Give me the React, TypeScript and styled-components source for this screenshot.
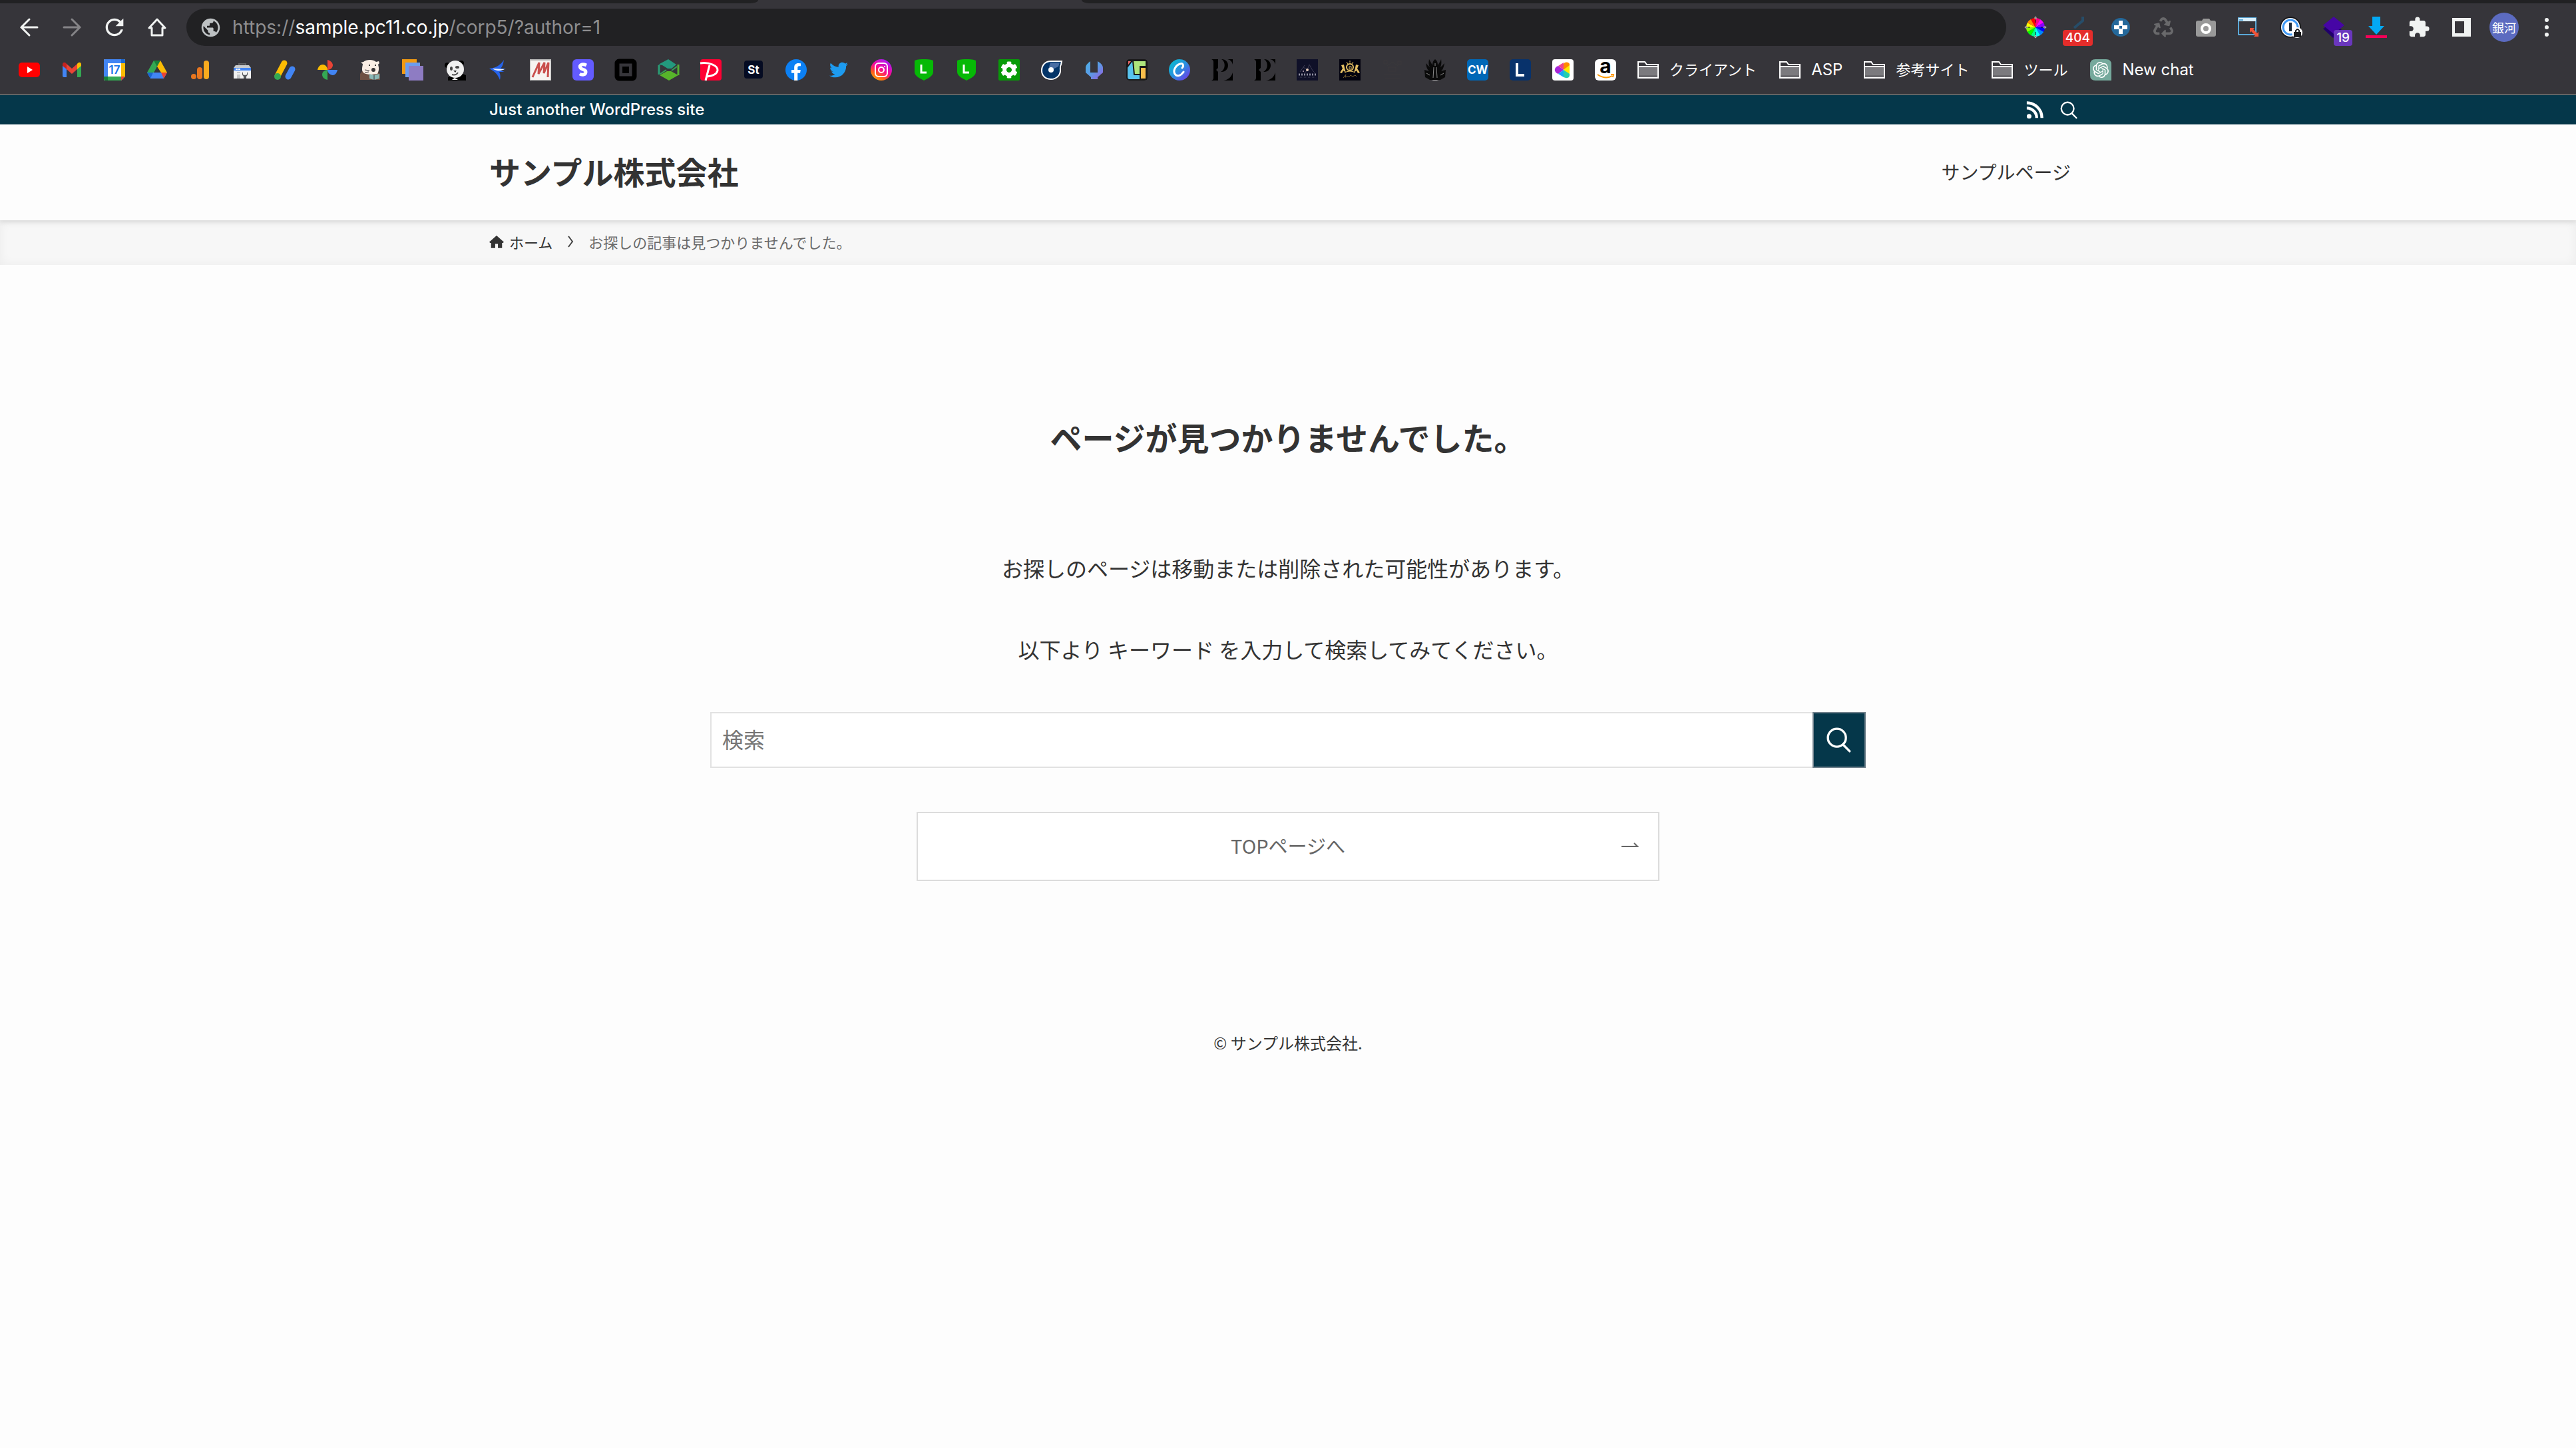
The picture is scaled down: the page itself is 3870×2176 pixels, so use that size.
import React from 'react';
import styled, { createGlobalStyle, css } from 'styled-components';
import { FaTwitter, FaRecycle, FaCog, FaFacebookF } from 'react-icons/fa';
import { MdExtension, MdPublic, MdRefresh } from 'react-icons/md';
import { SiOpenai } from 'react-icons/si';

const navy = '#05374a';
const chromeGrey = '#36353a';
const chromeDark = '#212123';
const uiFont = "Inter, 'Noto Sans CJK JP', sans-serif";
const jpFont = "'Noto Sans CJK JP', sans-serif";

const GlobalStyle = createGlobalStyle`
  * { box-sizing: border-box; }
  body {
    margin: 0;
    background: #fdfdfd;
    color: #333;
    font-family: ${jpFont};
    font-size: 32px;
  }
  a { color: inherit; text-decoration: none; }
  button { font: inherit; cursor: pointer; }
`;

/* ---------- browser frame ---------- */

const Browser = styled.div`
  background: ${chromeGrey};
  border-bottom: 2px solid #656464;
  font-family: ${uiFont};
`;

const TabStrip = styled.div`
  display: flex;
  height: 5px;
`;

const InactiveTabs = styled.div<{ $side: 'left' | 'right' }>`
  background: ${chromeDark};
  ${(p) =>
    p.$side === 'left'
      ? css`
          flex: 0 0 1139px;
          border-bottom-right-radius: 12px 5px;
        `
      : css`
          flex: 1;
          border-bottom-left-radius: 12px 5px;
        `}
`;

const ActiveTab = styled.div`
  flex: 0 0 486px;
`;

const Toolbar = styled.div`
  display: flex;
  align-items: center;
  height: 72px;
  padding: 0 12px;
`;

const ToolButton = styled.button`
  position: relative;
  display: flex;
  align-items: center;
  justify-content: center;
  width: 64px;
  height: 56px;
  padding: 0;
  border: 0;
  background: none;
  color: #f1f3f2;
`;

const Badge = styled.span<{ $color: string; $shift: number }>`
  position: absolute;
  right: ${(p) => p.$shift}px;
  bottom: 0;
  padding: 0 4px;
  border-radius: 4px;
  background: ${(p) => p.$color};
  color: #fff;
  font-size: 19px;
  font-weight: 500;
  line-height: 24px;
`;

const Avatar = styled.span`
  display: flex;
  align-items: center;
  justify-content: center;
  width: 44px;
  height: 44px;
  border-radius: 50%;
  background: #5c6bc0;
  color: #fff;
  font-size: 18px;
`;

const AddressBar = styled.div`
  display: flex;
  flex: 1;
  align-items: center;
  gap: 16px;
  height: 56px;
  margin: 0 12px;
  padding: 0 20px;
  border-radius: 28px;
  background: ${chromeDark};
  color: #bdc1c3;
`;

const Address = styled.div`
  flex: 1;
  color: #8e8e90;
  font-size: 28px;
  line-height: 40px;
  outline: none;
`;

const Host = styled.span`
  color: #fff;
`;

const Bookmarks = styled.nav`
  display: flex;
  align-items: center;
  gap: 32px;
  height: 64px;
  padding: 0 28px 8px;
`;

const Bookmark = styled.a`
  display: flex;
  align-items: center;
  gap: 16px;
  color: #fff;
`;

const BookmarkLabel = styled.span<{ $latin?: boolean }>`
  padding-right: ${(p) => (p.$latin ? 0 : 2)}px;
  font-size: ${(p) => (p.$latin ? 24 : 22)}px;
  line-height: 32px;
  white-space: nowrap;
`;

const Glyph = styled.svg`
  display: block;
  flex: none;
  overflow: visible;
`;

const Icon = ({ size = 32, children }: { size?: number; children: React.ReactNode }) => (
  <Glyph width={size} height={size} viewBox="0 0 32 32" fill="none" aria-hidden="true">
    {children}
  </Glyph>
);

const Letter = ({
  x = 16, y, size, fill = '#fff', weight = 700, children,
}: { x?: number; y: number; size: number; fill?: string; weight?: number; children: string }) => (
  <text x={x} y={y} fontSize={size} fill={fill} fontWeight={weight} textAnchor="middle" fontFamily="Inter, sans-serif">
    {children}
  </text>
);

const Shield = () => (
  <>
    <path d="M2 2C7 0 12 0 16 0s9 0 14 2v17c0 6-8 10-14 13C10 29 2 25 2 19z" fill="#06b906" />
    <path d="M12 8v12h8" stroke="#fff" strokeWidth="3" />
  </>
);

const SerifP = () => (
  <>
    <path d="M0 0h10v13l-3 3 3 3v13H0c2-1 3-2 3-4V4C3 2 2 1 0 0z" fill="#000" />
    <path d="M15 0c14 0 13 20-1 19 7-3 8-15 1-19zM24 0h8v8c-1-4-3-7-8-8zM18 32c8-1 12-6 14-12v12z" fill="#000" />
  </>
);

const FolderIcon = () => (
  <Icon>
    <path d="M1 4h10l3 4h17v20H1z" stroke="#fff" strokeWidth="2" />
    <path d="M2 12h28v15H2z" fill="#7b7a7e" />
    <path d="M2 24h28v3H2z" fill="#6a696d" />
    <path d="M1 11h30" stroke="#fff" strokeWidth="2" />
  </Icon>
);

const favicons: { name: string; art: React.ReactNode }[] = [
  {
    name: 'YouTube',
    art: (<><rect y="5" width="32" height="22" rx="5" fill="#f00" /><path d="M13 11l8 5-8 5z" fill="#fff" /></>),
  },
  {
    name: 'Gmail',
    art: (
      <>
        <path d="M2 9l6 5v13H4q-2 0-2-2z" fill="#4285f4" />
        <path d="M30 9l-6 5v13h4q2 0 2-2z" fill="#34a853" />
        <path d="M8 7l8 7 8-7v8l-8 7-8-7z" fill="#ea4335" />
        <path d="M2 8c0-4 4-4 6-1v8l-6-5z" fill="#c5221f" />
        <path d="M30 8c0-4-4-4-6-1v8l6-5z" fill="#fbbc04" />
      </>
    ),
  },
  {
    name: 'Calendar',
    art: (
      <>
        <rect width="32" height="32" rx="2" fill="#fff" />
        <path d="M0 2q0-2 2-2h24v6H6v20H0z" fill="#4285f4" />
        <path d="M26 0h4q2 0 2 2v4h-6z" fill="#1967d2" />
        <path d="M26 6h6v20h-6z" fill="#fbbc04" />
        <path d="M6 26h20v6H6z" fill="#34a853" />
        <path d="M0 26h6v6H2q-2 0-2-2z" fill="#188038" />
        <path d="M26 26h6l-6 6z" fill="#ea4335" />
        <path d="M32 26v6h-6z" fill="#36353a" />
        <Letter y={22} size={17} fill="#1a73e8" weight={600}>17</Letter>
      </>
    ),
  },
  {
    name: 'Drive',
    art: (
      <>
        <path d="M11 2h10l-5 9-9 18-6-9z" fill="#34a853" />
        <path d="M11 2h10l-5 9z" fill="#188038" />
        <path d="M21 2l10 18h-9l-6-9z" fill="#fbbc04" />
        <path d="M1 20h30l-5 9H6z" fill="#4285f4" />
        <path d="M1 20h9l-4 9z" fill="#1967d2" />
        <path d="M22 20h9l-5 9z" fill="#ea4335" />
        <path d="M16 12l4 8h-9z" fill="#36353a" />
      </>
    ),
  },
  {
    name: 'Analytics',
    art: (
      <>
        <rect x="22" y="2" width="8" height="28" rx="4" fill="#f9ab1e" />
        <rect x="12" y="12" width="8" height="18" rx="4" fill="#e8761f" />
        <circle cx="7" cy="26" r="4" fill="#e8761f" />
      </>
    ),
  },
  {
    name: 'Search Console',
    art: (
      <>
        <path d="M11 10V7h10v3" stroke="#606062" strokeWidth="2" />
        <path d="M6 9h20l3 4H3z" fill="#c9cbcd" />
        <path d="M3 13h26v16H3z" fill="#f1f1f1" />
        <path d="M3 13h26v4H3z" fill="#4285f4" />
        <path d="M6 15h3M10 15h3" stroke="#fff" strokeWidth="2" />
        <path d="M8 19h5v2H8zM8 23h5v6H8z" fill="#c6c8ca" />
        <path d="M17 19c-2 3-1 5 1 7v3h4v-3c2-2 3-4 1-7v4l-3 1-3-1z" fill="#55585c" />
      </>
    ),
  },
  {
    name: 'AdSense',
    art: (
      <g strokeLinecap="round" strokeWidth="9">
        <path d="M5 25L15 6" stroke="#fbbc04" />
        <path d="M21 26l6-11" stroke="#4285f4" />
        <circle cx="5" cy="26" r="5" fill="#34a853" />
      </g>
    ),
  },
  {
    name: 'Photos',
    art: (
      <>
        <path d="M16 1c5 1 8 5 8 8s-3 7-8 7z" fill="#ea4335" />
        <path d="M31 16c-1 5-4 8-7 8s-8-3-8-8z" fill="#4285f4" />
        <path d="M16 31c-5-1-8-4-8-8s4-7 8-7z" fill="#34a853" />
        <path d="M1 16c1-5 4-8 8-8s7 4 7 8z" fill="#fbbc04" />
      </>
    ),
  },
  {
    name: 'Otter',
    art: (
      <>
        <path d="M1 31V22l3-4h22l5 4v9z" fill="#6f5143" />
        <path d="M2 5l4-1C10 0 21 0 25 4l4-1 1 3-2 2c2 6 1 10-1 14l-9 1c-8 0-15-2-14-9 0-3 1-5 1-7z" fill="#fbeee4" />
        <circle cx="15" cy="9" r="1" fill="#000" /><circle cx="24" cy="9" r="1" fill="#000" />
        <ellipse cx="21" cy="16" rx="3" ry="3" fill="#3a3636" />
        <path d="M8 16l7 1M8 20l6-1" stroke="#3a3636" />
        <path d="M15 22l7 2 8-2v7l-8 2-7-2z" fill="#8cb8b5" />
        <path d="M22 24v7" stroke="#36353a" />
      </>
    ),
  },
  {
    name: 'Layers',
    art: (
      <>
        <path d="M0 0h22v22H0z" fill="#f29a12" />
        <path d="M5 5h22v22H5z" fill="#6c9cf0" />
        <path d="M10 10h22v22H10z" fill="#8e7cc3" />
      </>
    ),
  },
  {
    name: 'Panda',
    art: (
      <>
        <path d="M5 27l20-6 7 3v8H5z" fill="#000" />
        <circle cx="4" cy="9" r="4" fill="#000" /><circle cx="25" cy="6" r="4" fill="#000" />
        <ellipse cx="16" cy="15" rx="13" ry="13" fill="#f0f0f0" />
        <ellipse cx="10" cy="14" rx="2" ry="3" fill="#444" /><ellipse cx="19" cy="12" rx="3" ry="2" fill="#444" />
        <path d="M13 17h5l-2 3z" fill="#222" />
        <path d="M11 23q6 2 9-3" stroke="#555" strokeWidth="2" />
        <path d="M11 31l4-3 5 3z" fill="#fff" />
      </>
    ),
  },
  {
    name: 'Swallow',
    art: (
      <>
        <path d="M3 14l6-1C16 11 21 7 25 1c-1 6-2 10-5 13h8l-8 3 6 2h-8c2 4 2 8 1 12-3-7-6-11-11-14z" fill="#2563eb" />
        <path d="M8 14c6 0 12 1 18 1-6 3-13 3-18-1z" fill="#e7efff" />
      </>
    ),
  },
  {
    name: 'M',
    art: (
      <>
        <path d="M0 0h32v32H0z" fill="#bbb" /><path d="M1 2h30v29H1z" fill="#f7f3f1" />
        <path d="M4 27L14 5l-1 17L22 5l-1 16L28 5l-1 22" stroke="#c94f4d" strokeWidth="3" />
      </>
    ),
  },
  {
    name: 'Stripe',
    art: (<><rect width="32" height="32" rx="6" fill="#635bff" /><path d="M21 9c-7-3-11 0-9 4 2 3 8 2 8 6 0 5-6 5-9 3" stroke="#fff" strokeWidth="5" /></>),
  },
  {
    name: 'Square',
    art: (<><rect x="3" y="3" width="26" height="26" rx="3" stroke="#000" strokeWidth="7" /><rect x="11" y="11" width="10" height="10" fill="#000" /></>),
  },
  {
    name: 'Hexagon',
    art: (
      <>
        <path d="M1 8l15-8 12 8-7 6h-6l-8-5z" fill="#23997d" />
        <path d="M2 9v14" stroke="#2a9d75" strokeWidth="3" /><path d="M31 8v16" stroke="#54b233" strokeWidth="3" />
        <path d="M3 24l11-6h6l11 6-14 8z" fill="#57b52a" />
        <path d="M4 22l9-6M29 11l-8 6" stroke="#36a455" strokeWidth="2" />
      </>
    ),
  },
  {
    name: 'PayPay',
    art: (
      <>
        <rect width="32" height="32" rx="4" fill="#ff0033" />
        <path d="M0 6c14-2 27 4 26 11-1 5-7 8-16 9M14 9L8 32" stroke="#fff" strokeWidth="3" />
      </>
    ),
  },
  {
    name: 'St',
    art: (<><rect x="2" y="2" width="28" height="27" rx="4" fill="#050b22" /><Letter y={22} size={17}>St</Letter></>),
  },
  {
    name: 'Facebook',
    art: (<><circle cx="16" cy="16" r="16" fill="#0c80f4" /><FaFacebookF x={3} y={6} size={26} color="#fff" /></>),
  },
  { name: 'Twitter', art: <FaTwitter x={2} y={2} size={28} color="#1d9bf0" /> },
  {
    name: 'Instagram',
    art: (
      <>
        <defs>
          <linearGradient id="insta" x1="0" y1="1" x2=".6" y2="0">
            <stop stopColor="#ffcb00" /><stop offset=".35" stopColor="#ff5a1c" />
            <stop offset=".6" stopColor="#fb0a92" /><stop offset="1" stopColor="#b01af0" />
          </linearGradient>
        </defs>
        <circle cx="16" cy="16" r="16" fill="url(#insta)" />
        <rect x="7" y="6" width="18" height="20" rx="5" stroke="#fff" strokeWidth="2" />
        <circle cx="16" cy="16" r="4" stroke="#fff" strokeWidth="2" /><circle cx="21" cy="11" r="1" fill="#fff" />
      </>
    ),
  },
  { name: 'Lock shield', art: <Shield /> },
  { name: 'Second shield', art: <Shield /> },
  {
    name: 'Settings',
    art: (<><rect width="32" height="32" rx="2" fill="#089b08" /><FaCog x={3} y={3} size={26} color="#fff" /></>),
  },
  {
    name: 'Drop',
    art: (
      <>
        <path d="M31 3H15C6 3 1 9 1 17s6 13 14 13 14-6 14-13c0-4-1-6 1-9z" fill="#033468" stroke="#fff" strokeWidth="2" />
        <path d="M14 5h14l-2 6-8 4-6-3z" fill="#496da3" /><circle cx="15" cy="16" r="4" fill="#fff" />
      </>
    ),
  },
  {
    name: 'Wrench',
    art: (
      <>
        <defs>
          <linearGradient id="wrench" x1="0" y1="0" x2="1" y2="1">
            <stop stopColor="#4eb1e8" /><stop offset=".5" stopColor="#5a9ae5" /><stop offset="1" stopColor="#9a5ae0" />
          </linearGradient>
        </defs>
        <path d="M10 3v17h11V3c5 3 8 6 8 10v7l-8 7v3H11v-3l-8-7v-7c0-4 3-7 7-10z" fill="url(#wrench)" />
      </>
    ),
  },
  {
    name: 'Blocks',
    art: (
      <g stroke="#191919" strokeWidth="2">
        <rect x="1" y="1" width="30" height="30" rx="4" fill="#58c3ee" />
        <path d="M2 11V2h7z" fill="#ef6a6a" /><path d="M10 2h20v9h-9v12h-9z" fill="#aee57c" />
        <path d="M21 12h9v18h-9z" fill="#fbbf4b" />
      </g>
    ),
  },
  {
    name: 'Canva',
    art: (
      <>
        <defs>
          <linearGradient id="canva" x1="0" y1="0" x2="1" y2="1">
            <stop stopColor="#00c4cc" /><stop offset=".5" stopColor="#2a8fe0" /><stop offset="1" stopColor="#7d2ae8" />
          </linearGradient>
        </defs>
        <circle cx="16" cy="16" r="16" fill="url(#canva)" />
        <path d="M20 13c3-3 1-8-3-6C10 9 6 17 9 22c3 5 9 3 13-3" stroke="#fff" strokeWidth="3" strokeLinecap="round" />
      </>
    ),
  },
  { name: 'P one', art: <SerifP /> },
  { name: 'P two', art: <SerifP /> },
  {
    name: 'Galaxy',
    art: (
      <>
        <path d="M0 0h32v32H0z" fill="#0f1028" />
        <path d="M5 19l5-7 6 4 3-8 5 9 3 3M10 12l2-3M16 16l-4 5" stroke="#3d3c53" />
        <circle cx="16" cy="16" r="2" fill="#e8cdb9" /><circle cx="10" cy="18" r="1" fill="#c5adc0" />
        <path d="M3 23h26" stroke="#8f8ea0" strokeWidth="3" strokeDasharray="2 2" />
        <path d="M3 27h26" stroke="#4b4a5f" strokeDasharray="1 1" />
      </>
    ),
  },
  {
    name: 'Lions',
    art: (
      <>
        <path d="M0 0h32v32H0z" fill="#02020e" />
        <path d="M1 20l4-6-2-5 4-1 1 5 2 7-4-3-2 4zM31 20l-4-6 2-5-4-1-1 5-2 7 4-3 2 4z" fill="#e5bf63" />
        <circle cx="16" cy="12" r="5" stroke="#e5bf63" strokeWidth="2" />
        <path d="M16 2v3M11 4l2 3M21 4l-2 3M15 11h3v4h-3zM8 20q8-4 16 0" stroke="#e5bf63" />
        <path d="M6 28l4-5-1 4 4-1 2 0 2-2 3 2 4-2 2 2" stroke="#77602f" />
      </>
    ),
  },
  {
    name: 'Crest',
    art: (<g stroke="#3a393b"><path d="M3 2h5v5H3zM24 3h5v5h-5zM8 10l8-6 8 6M10 12h11v6H10zM3 23h26M5 29h22" /></g>),
  },
  {
    name: 'Wings',
    art: (
      <>
        <path d="M2 25h28c-4 9-24 9-28 0z" fill="#d4d4d4" />
        <path d="M16 0c3 2 4 5 4 9 2-3 4-6 5-9 1 6 0 9-1 12 3-2 4-4 6-6-1 7-3 10-5 12l7-2-1 11-7 4H8l-7-4L0 16l7 2C4 15 3 12 2 6l6 6C6 8 6 5 7 0l5 9c0-4 1-7 4-9z" fill="#0a0a0a" />
        <path d="M16 6v4M14 12l-1 16M18 12l1 16M3 21l5 3M29 21l-5 3" stroke="#8b8b8b" />
      </>
    ),
  },
  {
    name: 'CW',
    art: (<><rect width="32" height="32" rx="5" fill="#0068b7" /><Letter y={22} size={17}>CW</Letter></>),
  },
  {
    name: 'L',
    art: (<><rect width="32" height="32" rx="5" fill="#08326b" /><path d="M11 6v18h11" stroke="#fff" strokeWidth="4" /></>),
  },
  {
    name: 'Colour fan',
    art: (
      <>
        <rect width="32" height="32" rx="4" fill="#fff" />
        <path d="M17 16L9 10l8-5z" fill="#f0448c" /><path d="M17 16V7c2-4 9-3 9 1v2z" fill="#ff8a00" />
        <path d="M17 16l9-7v14z" fill="#ffe800" /><path d="M17 16l-8 6c-7-2-7-10 0-12z" fill="#a726d8" />
        <path d="M17 16v11l-8-5z" fill="#18a7f7" /><path d="M17 16l9 6c1 7-5 7-9 5z" fill="#25cfae" />
      </>
    ),
  },
  {
    name: 'Amazon',
    art: (
      <>
        <rect width="32" height="32" rx="6" fill="#fff" />
        <Letter y={21} size={30} fill="#000">a</Letter>
        <path d="M4 23q12 8 22 2M24 23h4l-1 4" stroke="#ff9900" strokeWidth="2" />
      </>
    ),
  },
];

const folders = [
  { label: 'クライアント' },
  { label: 'ASP', latin: true },
  { label: '参考サイト' },
  { label: 'ツール' },
];

const wheel = ['#ff0', '#f80', '#f00', '#f08', '#f0f', '#80f', '#00f', '#08f', '#0ff', '#0f8', '#0f0', '#8f0'];

const ColorWheel = () => (
  <Icon>
    {wheel.map((color, i) => {
      const start = ((i - 6) * Math.PI) / 6;
      const end = start + Math.PI / 6;
      return (
        <path
          key={color}
          fill={color}
          d={`M16 16L${16 + 14 * Math.cos(start)} ${16 + 14 * Math.sin(start)}A14 14 0 0 1 ${16 + 14 * Math.cos(end)} ${16 + 14 * Math.sin(end)}z`}
        />
      );
    })}
    <path d="M16 2v7M16 23v7M2 16h6M24 16h6" stroke="#111" />
    <g stroke="#ddd" fill="#111">
      <ellipse cx="16" cy="2" rx="1" ry="2" /><ellipse cx="16" cy="30" rx="1" ry="2" />
      <ellipse cx="2" cy="16" rx="2" ry="1" /><ellipse cx="30" cy="16" rx="2" ry="1" />
    </g>
  </Icon>
);

const extensions: { name: string; art: React.ReactNode; badge?: string; color?: string; shift?: number }[] = [
  { name: 'Color picker', art: <ColorWheel /> },
  {
    name: 'Link checker',
    badge: '404', color: '#e42d2b', shift: 10,
    art: (<Icon><path d="M23 0v6L10 17" stroke="#264d69" strokeWidth="4" /></Icon>),
  },
  {
    name: 'Add',
    art: (
      <Icon>
        <circle cx="16" cy="16" r="14" fill="#24689a" />
        <path d="M16 6v20M6 16h20" stroke="#fff" strokeWidth="6" /><path d="M14 14h4v4h-4z" fill="#24689a" />
      </Icon>
    ),
  },
  { name: 'Recycle', art: <FaRecycle size={30} color="#69696b" /> },
  {
    name: 'Camera',
    art: (
      <Icon>
        <path d="M4 6h6l2-3h9l2 3h5q3 0 3 3v18q0 3-3 3H4q-3 0-3-3V9q0-3 3-3z" fill="#999" />
        <circle cx="16" cy="18" r="6" stroke="#fff" strokeWidth="4" />
      </Icon>
    ),
  },
  {
    name: 'Window resizer',
    art: (
      <Icon>
        <path d="M1 2h26v25H1z" stroke="#5aa7d6" strokeWidth="2" /><path d="M1 2h26v5H1z" fill="#d8effb" />
        <path d="M2 5h6" stroke="#5aa7d6" strokeWidth="2" />
        <path d="M18 17h7l-2 2 6 6 2-2v7h-7l2-2-6-6-2 2z" fill="#f05338" />
      </Icon>
    ),
  },
  {
    name: 'Password manager',
    art: (
      <Icon>
        <circle cx="15" cy="16" r="15" fill="#fff" stroke="#1b1b1d" strokeWidth="2" />
        <circle cx="15" cy="16" r="11" stroke="#3f98f3" strokeWidth="3" /><path d="M15 9v13" stroke="#1b2a3b" strokeWidth="4" />
        <circle cx="25" cy="24" r="8" fill="#fff" /><path d="M20 23h11v8H20z" fill="#1b1b1d" />
        <path d="M23 23v-2q3-4 5 0v2" stroke="#1b1b1d" strokeWidth="2" />
      </Icon>
    ),
  },
  {
    name: 'Inspector',
    badge: '19', color: '#6a37bd', shift: 4,
    art: (<Icon><path d="M0 18l16-10 12 12-13 12z" fill="#20006b" /><path d="M16 0l16 13-16 13L0 13z" fill="#4605a5" /></Icon>),
  },
  {
    name: 'Downloader',
    art: (<Icon><path d="M10 0h12v14h6L16 27 4 14h6z" fill="#03a9f4" /><path d="M0 28h32v4H0z" fill="#f50057" /></Icon>),
  },
  { name: 'Extensions', art: <MdExtension size={34} /> },
  { name: 'Side panel', art: (<Icon><path d="M2 2h28v28H2zM6 7v18h14V7z" fill="#f1f3f2" fillRule="evenodd" /></Icon>) },
];

/* ---------- site ---------- */

const Container = styled.div`
  display: flex;
  align-items: center;
  justify-content: space-between;
  width: 100%;
  max-width: 2400px;
  margin: 0 auto;
`;

const TopBar = styled.div`
  background: ${navy};
  color: #fff;
  font-family: ${uiFont};
  font-size: 24px;
  font-weight: 500;
  line-height: 44px;
`;

const TopLinks = styled.div`
  display: flex;
  align-items: center;
  gap: 24px;
  padding-right: 14px;
`;

const IconLink = styled.a`
  display: flex;
`;

const IconButton = styled.button`
  display: flex;
  padding: 0;
  border: 0;
  background: none;
  color: #fff;
`;

const Header = styled.header`
  position: relative;
  display: flex;
  height: 144px;
  padding-bottom: 4px;
  background: #fdfdfd;
  box-shadow: 0 2px 8px rgba(0, 0, 0, 0.12);
`;

const SiteTitle = styled.a`
  font-size: 47px;
  font-weight: 700;
  line-height: 72px;
`;

const NavLink = styled.a`
  padding: 0 24px;
  font-size: 28px;
  line-height: 48px;
`;

const Breadcrumb = styled.nav`
  background: #f7f7f7;
  box-shadow: inset 0 0 16px rgba(0, 0, 0, 0.05);
  font-size: 22px;
`;

const Crumbs = styled.ol`
  display: flex;
  flex: 1;
  align-items: center;
  gap: 22px;
  height: 67px;
  margin: 0;
  padding: 0 0 4px;
  list-style: none;
`;

const Crumb = styled.li<{ $current?: boolean }>`
  color: ${(p) => (p.$current ? '#6a6a6a' : '#333')};
`;

const HomeLink = styled.a`
  display: flex;
  align-items: center;
  gap: 8px;
`;

const Main = styled.main`
  display: flex;
  flex-direction: column;
  align-items: stretch;
  max-width: 1800px;
  margin: 0 auto;
  padding: 222px 32px 0;
  text-align: center;
`;

const Heading = styled.h1`
  margin: 0 0 132px;
  font-size: 48px;
  font-weight: 700;
  line-height: 72px;
`;

const Message = styled.p`
  margin: 0 0 64px;
  font-size: 32px;
  line-height: 58px;
`;

const SearchForm = styled.form`
  display: flex;
  height: 84px;
  margin-top: 2px;
`;

const SearchInput = styled.input`
  flex: 1;
  min-width: 0;
  padding: 0 16px 4px;
  border: 2px solid #e2e2e2;
  border-right: 0;
  border-radius: 0;
  background: #fff;
  color: #333;
  font: 32px ${jpFont};
  &::placeholder { color: #757575; }
`;

const SearchButton = styled.button`
  display: flex;
  align-items: center;
  justify-content: center;
  width: 80px;
  padding: 0;
  border: 2px solid #6f808b;
  background: ${navy};
  color: #fff;
`;

const TopPageLink = styled.a`
  display: grid;
  grid-template-columns: 1fr auto 1fr;
  align-items: center;
  align-self: center;
  width: 100%;
  max-width: 1116px;
  height: 104px;
  margin-top: 66px;
  padding: 0 30px 4px;
  border: 2px solid #dcdcdc;
  background: #fff;
  color: #666;
  font-size: 29px;
`;

const LinkText = styled.span`
  grid-column: 2;
`;

const LinkArrow = styled.span`
  display: flex;
  justify-content: flex-end;
`;

const Footer = styled.footer`
  padding: 225px 32px 48px;
  font-size: 24px;
  line-height: 36px;
  text-align: center;
`;

const SearchIcon = ({ size, stroke }: { size: number; stroke: number }) => (
  <Icon size={size}>
    <circle cx="13" cy="13" r="12" stroke="currentColor" strokeWidth={stroke} />
    <path d="M21 22l9 9" stroke="currentColor" strokeWidth={stroke} strokeLinecap="round" />
  </Icon>
);

export default function App() {
  return (
    <>
      <GlobalStyle />
      <Browser>
        <TabStrip>
          <InactiveTabs $side="left" />
          <ActiveTab />
          <InactiveTabs $side="right" />
        </TabStrip>
        <Toolbar>
          <ToolButton aria-label="Back">
            <Icon><path d="M28 16H4M16 4L4 16l12 12" stroke="#f1f3f2" strokeWidth="3" strokeLinecap="round" /></Icon>
          </ToolButton>
          <ToolButton aria-label="Forward">
            <Icon><path d="M4 16h24M16 4l12 12-12 12" stroke="#858487" strokeWidth="3" strokeLinecap="round" /></Icon>
          </ToolButton>
          <ToolButton aria-label="Reload"><MdRefresh size={40} /></ToolButton>
          <ToolButton aria-label="Home">
            <Icon><path d="M4 17L16 4l12 13h-4v11H8V17z" stroke="#f1f3f2" strokeWidth="3" strokeLinejoin="round" /></Icon>
          </ToolButton>
          <AddressBar>
            <MdPublic size={33} />
            <Address role="textbox" aria-label="Address" contentEditable suppressContentEditableWarning spellCheck={false}>
              https://<Host>sample.pc11.co.jp</Host>/corp5/?author=1
            </Address>
          </AddressBar>
          {extensions.map((item) => (
            <ToolButton key={item.name} aria-label={item.name}>
              {item.art}
              {item.badge && <Badge $color={item.color!} $shift={item.shift!}>{item.badge}</Badge>}
            </ToolButton>
          ))}
          <ToolButton aria-label="Profile"><Avatar>銀河</Avatar></ToolButton>
          <ToolButton aria-label="Menu">
            <Icon><g fill="#f1f3f2"><circle cx="16" cy="5" r="3" /><circle cx="16" cy="16" r="3" /><circle cx="16" cy="27" r="3" /></g></Icon>
          </ToolButton>
        </Toolbar>
        <Bookmarks aria-label="Bookmarks">
          {favicons.map((item) => (
            <Bookmark key={item.name} href="#" aria-label={item.name}>
              <Icon>{item.art}</Icon>
            </Bookmark>
          ))}
          {folders.map((item) => (
            <Bookmark key={item.label} href="#">
              <FolderIcon />
              <BookmarkLabel $latin={item.latin}>{item.label}</BookmarkLabel>
            </Bookmark>
          ))}
          <Bookmark href="#">
            <Icon>
              <path d="M8 0h16q8 0 8 8v24H8q-8 0-8-8V8q0-8 8-8z" fill="#75a99c" />
              <SiOpenai x={4} y={4} size={24} color="#fff" />
            </Icon>
            <BookmarkLabel $latin>New chat</BookmarkLabel>
          </Bookmark>
        </Bookmarks>
      </Browser>

      <TopBar>
        <Container>
          <span>Just another WordPress site</span>
          <TopLinks>
            <IconLink href="#" aria-label="RSS">
              <Icon size={28}>
                <circle cx="5" cy="27" r="4" fill="#fff" />
                <path d="M1 13c9 0 17 7 17 17M1 4c14 0 26 11 26 26" stroke="#fff" strokeWidth="5" />
              </Icon>
            </IconLink>
            <IconButton aria-label="検索を開く"><SearchIcon size={25} stroke={3} /></IconButton>
          </TopLinks>
        </Container>
      </TopBar>

      <Header>
        <Container>
          <SiteTitle href="#">サンプル株式会社</SiteTitle>
          <nav><NavLink href="#">サンプルページ</NavLink></nav>
        </Container>
      </Header>

      <Breadcrumb aria-label="パンくず">
        <Container>
          <Crumbs>
            <Crumb>
              <HomeLink href="#">
                <Icon size={22}><path d="M16 3l16 14-2 2h-2v11h-9v-9h-6v9H4V19H2l-2-2z" fill="#333" /></Icon>
                ホーム
              </HomeLink>
            </Crumb>
            <Crumb aria-hidden="true">
              <Glyph width="10" height="18" viewBox="0 0 10 18" fill="none"><path d="M2 1l6 8-6 8" stroke="#444" strokeWidth="2" /></Glyph>
            </Crumb>
            <Crumb $current>お探しの記事は見つかりませんでした。</Crumb>
          </Crumbs>
        </Container>
      </Breadcrumb>

      <Main>
        <Heading>ページが見つかりませんでした。</Heading>
        <Message>お探しのページは移動または削除された可能性があります。</Message>
        <Message>以下より キーワード を入力して検索してみてください。</Message>
        <SearchForm role="search" onSubmit={(e) => e.preventDefault()}>
          <SearchInput type="text" placeholder="検索" aria-label="検索ワード" />
          <SearchButton type="submit" aria-label="検索を実行する"><SearchIcon size={36} stroke={3} /></SearchButton>
        </SearchForm>
        <TopPageLink href="#">
          <LinkText>TOPページへ</LinkText>
          <LinkArrow>
            <Glyph width="25" height="8" viewBox="0 0 25 8" fill="none"><path d="M0 6h24l-5-5" stroke="#666" strokeWidth="2" /></Glyph>
          </LinkArrow>
        </TopPageLink>
      </Main>

      <Footer>© サンプル株式会社.</Footer>
    </>
  );
}
